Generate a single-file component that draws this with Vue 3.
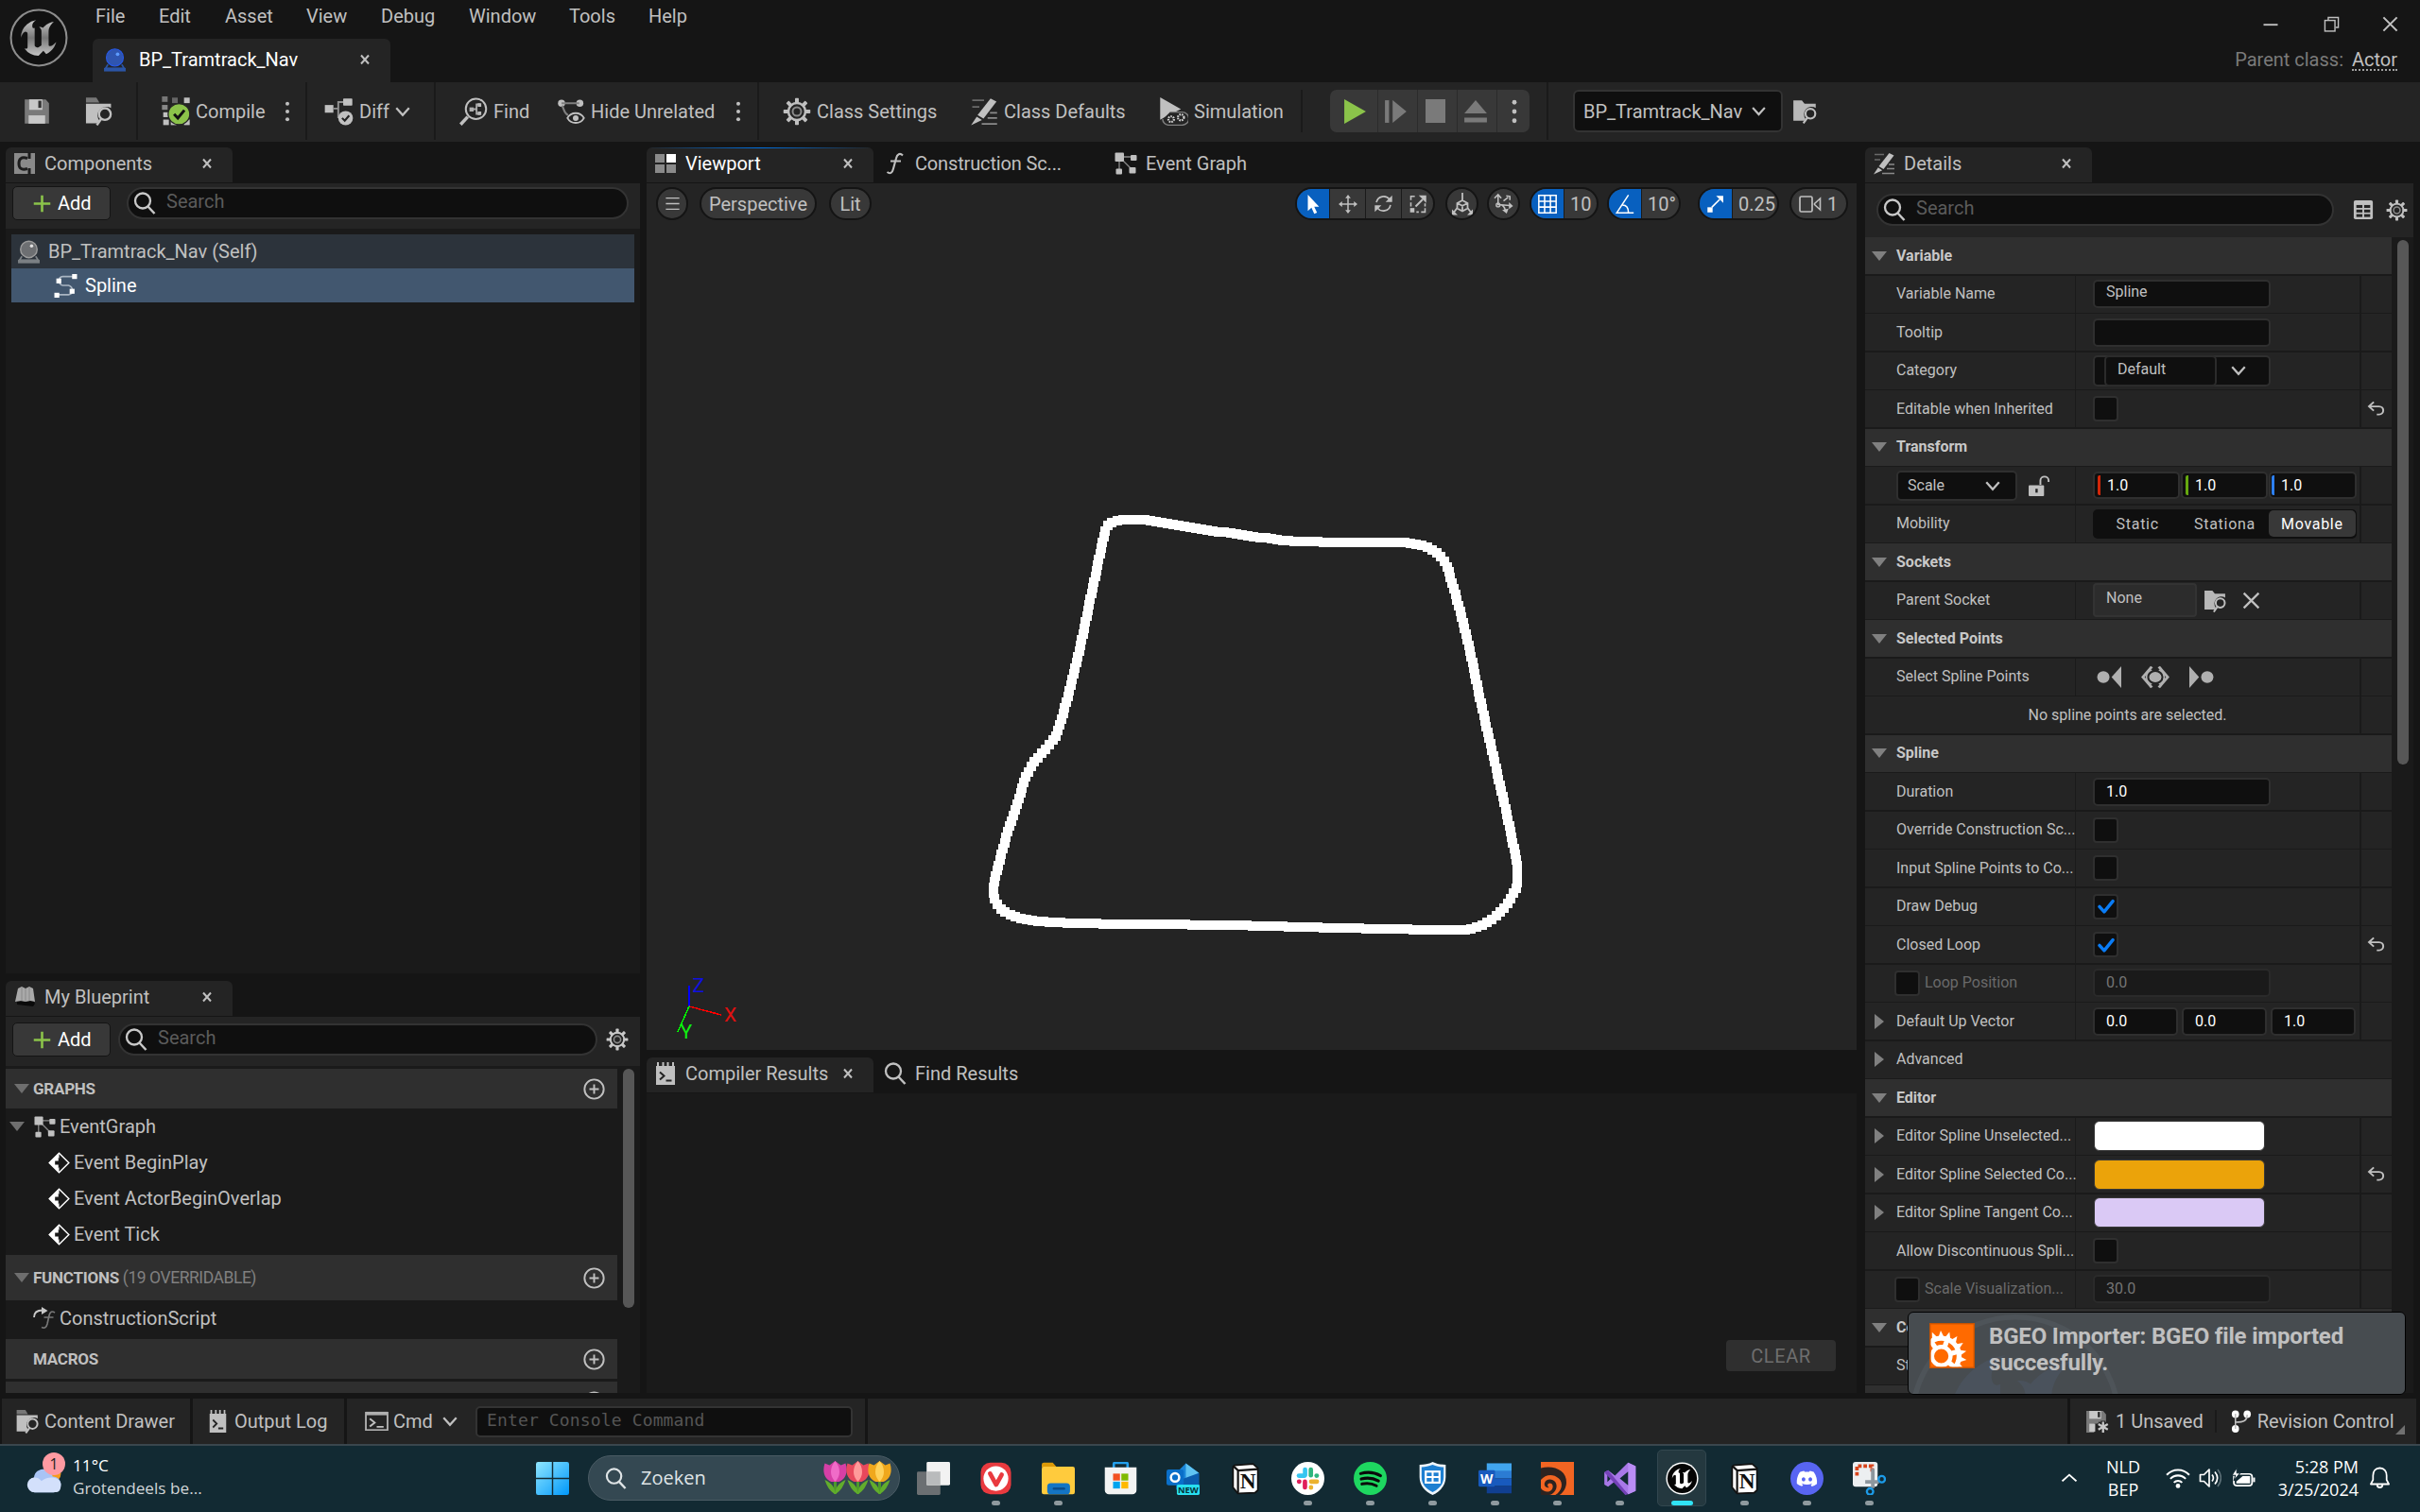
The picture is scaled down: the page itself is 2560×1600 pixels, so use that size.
<script setup>
import { h } from 'vue'

const gear = (() => {
  let teeth = ''
  for (let i = 0; i < 8; i++) teeth += `<rect x="10.4" y="0.6" width="3.2" height="5" rx=".6" transform="rotate(${i * 45} 12 12)" fill="currentColor"/>`
  return teeth + '<circle cx="12" cy="12" r="7.2" fill="none" stroke="currentColor" stroke-width="2"/><circle cx="12" cy="12" r="3.6" fill="none" stroke="#8a8a8a" stroke-width="1.6"/>'
})()

const unrealU = 'M19.13 13.729c-.206.997-1.126 3.557-4.06 4.942l-1.179-1.325-1.988 2a7.338 7.338 0 01-5.804-2.978 2.859 2.859 0 00.65.123c.326.006.678-.114.678-.66v-5.394a.89.89 0 00-1.116-.89c-.92.212-1.656 2.509-1.656 2.509a7.304 7.304 0 012.528-5.597 7.408 7.408 0 013.73-1.721c-1.006.573-1.57 1.507-1.57 2.29 0 1.262.76 1.109.984.923v7.28a1.157 1.157 0 00.148.256 1.075 1.075 0 00.88.445c.76 0 1.747-.868 1.747-.868V9.172c0-.6-.452-1.324-.905-1.572 0 0 .838-.149 1.484.346a5.537 5.537 0 01.387-.425c1.508-1.48 2.929-1.902 4.112-2.112 0 0-2.151 1.69-2.151 3.96 0 1.687.043 5.801.043 5.801.799.771 1.986-.342 3.059-1.441Z'

const tulip = (x, c1, c2) => `<path d="M${x} 18v17" stroke="#4c9a2a" stroke-width="3"/><path d="M${x} 35c-6-3-9-9-11-15 7 3 11 8 11 15zM${x} 35c6-3 9-9 11-15-7 3-11 8-11 15z" fill="#62ad2c"/><path d="M${x - 11} 2.500l5 2L${x} 0l6 4.500 5-2c3 9 0 17-7 19.500h-8c-7-2.500-10-10.500-7-19.500z" fill="${c1}"/><path d="M${x} 0c6 7 6 16 0 22-6-6-6-15 0-22z" fill="${c2}"/>`

const notion = '<path d="M4 2.5L17.5 1.5 21 4.5V20.5L19 22.3 6.5 22.8 3 18.5V3.5z" fill="#fff" stroke="#111" stroke-width="1.2"/><path d="M3.2 3L6.6 6.2V22.5M6.6 6.2L21 5.2" fill="none" stroke="#111" stroke-width="1.5"/><text x="13.8" y="19.2" text-anchor="middle" font-family="Liberation Serif, serif" font-weight="700" font-size="16" fill="#111">N</text>'

const icons = {
  logo: `<defs><linearGradient id="lg" x1="0" y1="0" x2="0" y2="1"><stop offset="0" stop-color="#c8c8c8"/><stop offset=".5" stop-color="#777"/><stop offset="1" stop-color="#c4c4c4"/></linearGradient></defs><circle cx="12" cy="12" r="11.4" fill="#111" stroke="#8d8d8d" stroke-width=".8"/><path d="${unrealU}" fill="url(#lg)"/>`,
  actorBlue: '<path d="M5 16.5L2.5 20.5h19L19 16.5" fill="none" stroke="#2b55a5" stroke-width="1.6"/><rect x="1" y="20" width="22" height="3.6" fill="#2b55a5"/><circle cx="12" cy="9.5" r="8.6" fill="#2f55b0" stroke="#2858e0" stroke-width="1.2"/><circle cx="14.8" cy="6" r="1.8" fill="#5d9bff"/>',
  actor: '<path d="M5 16.5L2.5 20.5h19L19 16.5" fill="none" stroke="#808589" stroke-width="1.6"/><rect x="1" y="20" width="22" height="3.6" fill="#7b8084"/><circle cx="12" cy="9.5" r="8.4" fill="#6d6f72" stroke="#9b9b9b" stroke-width="1.4"/><circle cx="14.8" cy="6" r="1.7" fill="#e0e0e0"/>',
  save: '<path d="M1 1h19l3 3.5V23H1z" fill="#7a7a7a"/><path d="M5 1h12v9.500H5z" fill="#c8c8c8"/><rect x="13.300" y="2.200" width="2.800" height="6.500" fill="#333"/><rect x="4.500" y="15.500" width="15" height="7.500" fill="#c8c8c8"/>',
  saveStar: '<path d="M1 1h17l3 3.500V14H1z M1 14h8v9H1z" fill="#7a7a7a"/><path d="M4 1h12v8H4z" fill="#c8c8c8"/><rect x="12.500" y="2" width="2.500" height="5.500" fill="#333"/><rect x="4" y="14" width="6" height="8" fill="#c8c8c8"/><path d="M18 11v12M12.700 14l10.600 6M23.300 14l-10.600 6" stroke="#242424" stroke-width="5"/><path d="M18 12v11M13.200 14.500l9.600 5.500M22.800 14.500l-9.600 5.500" stroke="#c8c8c8" stroke-width="2.200"/>',
  folderFind: '<path d="M1.500 1h8.500l2.500 4H1.500z" fill="#777"/><path d="M1.500 6H22v3.500a7.200 7.200 0 0 0-9.500 10.500l-2 2H1.500z" fill="#c0c0c0"/><circle cx="17" cy="14.500" r="4.800" fill="none" stroke="#c0c0c0" stroke-width="1.800"/><path d="M14 18.500l-3.600 5" stroke="#c0c0c0" stroke-width="1.900"/>',
  folderSmall: '<path d="M1 2h8l2.500 3H22v4a7.200 7.200 0 0 0-9.500 10.500l-1 1.500H1z" fill="#b8b8b8"/><circle cx="17" cy="14.500" r="4.600" fill="none" stroke="#c0c0c0" stroke-width="1.900"/><path d="M14 18.500l-3.600 5" stroke="#c0c0c0" stroke-width="1.900"/>',
  compile: '<g fill="#c0c0c0"><rect x="1" y="0" width="4.500" height="4.500" fill="#777"/><rect x="9" y="1" width="4.500" height="4.500" fill="#666"/><rect x="18.500" y="1" width="4.500" height="4.500"/><rect x="1" y="7" width="4.500" height="4" fill="#888"/><rect x="2" y="13" width="4" height="4"/><rect x="2" y="19" width="4.500" height="4.500"/><rect x="8" y="19" width="4.500" height="4.500"/><rect x="18.500" y="19" width="4.500" height="4.500"/></g><circle cx="14.500" cy="14.500" r="8.600" fill="#8bc34a" stroke="#242424" stroke-width="1"/><path d="M10.600 14.500l3 3.300 5.200-6.500" fill="none" stroke="#111" stroke-width="2.200"/>',
  diff: '<rect x="0.500" y="6.500" width="7" height="6.500" fill="#c0c0c0"/><rect x="15.500" y="1" width="7.500" height="6" rx=".6" fill="#c0c0c0"/><path d="M7 9.500h4.500V4h4M11.500 9.500v8" fill="none" stroke="#909090" stroke-width="1.500"/><circle cx="17.500" cy="17.500" r="6" fill="#c0c0c0"/><path d="M14.600 17.500l2.200 2.300 3.600-4.400" fill="none" stroke="#222" stroke-width="1.600"/>',
  find: '<circle cx="14" cy="9.800" r="8.600" fill="none" stroke="#c0c0c0" stroke-width="1.600"/><path d="M7 16.500l-6 6.500" stroke="#c0c0c0" stroke-width="2.800"/><rect x="8.500" y="8.500" width="3.500" height="3.500" fill="#b0b0b0"/><path d="M17.500 6h-3v8h3M12 10h2.500" fill="none" stroke="#aaa" stroke-width="1.500"/><rect x="15.500" y="5" width="3" height="3" fill="#bbb"/><rect x="15.500" y="12" width="3" height="3" fill="#bbb"/>',
  hide: '<circle cx="4" cy="5" r="3" fill="#c0c0c0"/><circle cx="19.500" cy="5" r="3" fill="#c0c0c0"/><path d="M4 5h15M4.500 7c2 4 2 7 5 8" fill="none" stroke="#808080" stroke-width="1.700"/><path d="M9 17.500c3-5.500 11-5.500 14 0-3 5.500-11 5.500-14 0z" fill="#242424" stroke="#c0c0c0" stroke-width="1.500"/><circle cx="16" cy="17.500" r="2.400" fill="#c0c0c0"/>',
  gear,
  pen: '<g stroke="#8a8a8a" stroke-width="1.400"><path d="M2 2.500h10M2 8h6" stroke="#6a6a6a"/><path d="M17 13h6M15 17.500h8M10 22.500h13"/></g><path d="M17.500 1l5 2.500-11 14.500-5-3z" fill="#c0c0c0"/><path d="M5.800 16.300l4.400 2.900L1 23.500z" fill="#c0c0c0"/>',
  sim: '<path d="M1 0L18 10 8 15v0L1 19z" fill="#c0c0c0"/><path d="M9 12.500h10a5.200 5.200 0 0 1 0 11H8a5.200 5.200 0 0 1-5-5" fill="#242424" stroke="#808080" stroke-width="1.100"/><circle cx="10" cy="18.500" r="2.300" fill="none" stroke="#d0d0d0" stroke-width="1.700" stroke-dasharray="1.300 .7"/><circle cx="18" cy="17" r="2.500" fill="none" stroke="#d0d0d0" stroke-width="1.700" stroke-dasharray="1.300 .7"/>',
  play: '<path d="M1 0L23 12 1 24z" fill="#8bc34a"/>',
  step: '<rect x="1" y="1" width="4" height="22" fill="#7a7a7a"/><path d="M8.500 1L22 12 8.500 23z" fill="#7a7a7a"/>',
  stop: '<rect x="1" y="0" width="21" height="24" fill="#7a7a7a"/>',
  eject: '<path d="M12 0l11 14H1z" fill="#7a7a7a"/><rect x="1" y="18.500" width="22" height="5" fill="#7a7a7a"/>',
  dots: '<circle cx="12" cy="3" r="2.200" fill="currentColor"/><circle cx="12" cy="12" r="2.200" fill="currentColor"/><circle cx="12" cy="21" r="2.200" fill="currentColor"/>',
  chev: '<path d="M3 7l9 10 9-10" fill="none" stroke="currentColor" stroke-width="3"/>',
  chevUp: '<path d="M2 17l10-10 10 10" fill="none" stroke="currentColor" stroke-width="2.600"/>',
  close: '<path d="M4 3l16 18M20 3L4 21" fill="none" stroke="currentColor" stroke-width="4"/>',
  closeThin: '<path d="M3 3l18 18M21 3L3 21" fill="none" stroke="currentColor" stroke-width="2.600"/>',
  min: '<rect x="2" y="11" width="20" height="2.500" fill="currentColor"/>',
  restore: '<path d="M7 6V2h15v15h-4" fill="none" stroke="currentColor" stroke-width="2"/><rect x="2" y="6.500" width="15" height="16" fill="none" stroke="currentColor" stroke-width="2"/>',
  comp: '<path d="M1 1h22v22H1z" fill="#8a8a8a"/><path d="M15 6.500c-7-2-9 1-9 5.500s2 7.500 9 5.500" fill="none" stroke="#1d1d1d" stroke-width="3"/><path d="M17 0v7M17 17v7" stroke="#1d1d1d" stroke-width="3"/>',
  book: '<path d="M4 20l17 2 2-3-2-3-17 1z" fill="#0a0a0a"/><path d="M5 3l4-2 4 2 4-2 4 2 2 14-5-1-5 1-5-1-6 1z" fill="#a9a9a9"/><path d="M9 1v15M13 3v14M17 2v14" stroke="#8a8a8a" stroke-width="1"/>',
  vp: '<rect x="1" y="2" width="10" height="9" fill="#8a8a8a"/><rect x="13" y="2" width="10" height="9" fill="#fff"/><rect x="1" y="13" width="10" height="9" fill="#8a8a8a"/><rect x="13" y="13" width="10" height="9" fill="#8a8a8a"/>',
  fn: '<path d="M20 3.500c-3-3-6-1.500-7 3l-3 11c-1 4.500-3.500 6-6.500 3.500M7 9.500h11" fill="none" stroke="currentColor" stroke-width="2.100"/>',
  fnArrow: '<path d="M1 11c0-5 3-7.500 9-7.500" fill="none" stroke="#c8c8c8" stroke-width="1.800"/><path d="M9 0l6.500 4L9 8z" fill="#c8c8c8"/><path d="M23 6c-3-2-5-1-6 3l-2 9c-1 4-3 5-6 3.500M11.500 11h10" fill="none" stroke="#777" stroke-width="1.700"/>',
  graph: '<path d="M5 5h15M5 5v16M6 6l13 13" fill="none" stroke="#8a8a8a" stroke-width="1.300"/><rect x="0.500" y="0.500" width="9.500" height="9.500" rx="1" fill="#c0c0c0"/><rect x="17" y="3" width="6.500" height="6" rx="1" fill="#c0c0c0"/><rect x="1.500" y="17.500" width="6.500" height="6" rx="1" fill="#c0c0c0"/><rect x="15.500" y="16" width="7" height="6.500" rx="1" fill="#c0c0c0"/>',
  event: '<path d="M12 1.200L22.800 12 12 22.800 1.200 12z" fill="none" stroke="#fff" stroke-width="1.500"/><path d="M12 1L1 12l11 11z" fill="#fff"/><path d="M7.500 9.800h3.700V6L17 12l-5.800 6v-3.800H7.500z" fill="#1a1a1a"/>',
  plusC: '<circle cx="12" cy="12" r="10.600" fill="none" stroke="currentColor" stroke-width="2"/><path d="M12 6.800v10.400M6.800 12h10.400" stroke="currentColor" stroke-width="2"/>',
  plus: '<path d="M12 2v20M2 12h20" stroke="#8bc34a" stroke-width="3"/>',
  search: '<circle cx="10" cy="9.500" r="8" fill="none" stroke="currentColor" stroke-width="2.300"/><path d="M15.500 15.500L22.500 23" stroke="currentColor" stroke-width="2.500"/>',
  spline: '<path d="M21 2.500H9C4 3 4 10 9 11.500h6c5 1.500 5 9 0 9.500H3" fill="none" stroke="#a9b5c2" stroke-width="1.500"/><g fill="#fff"><rect x="18.500" y="0" width="5" height="5"/><rect x="2.500" y="4.500" width="5" height="5"/><rect x="16" y="15" width="5" height="5"/><rect x="0.500" y="19" width="5" height="5"/></g>',
  burger: '<path d="M3 4.500h18M3 12h18M3 19.500h18" stroke="currentColor" stroke-width="1.700"/>',
  cursor: '<path d="M6 1v19l4.200-3.800 3.200 7 3.200-1.500-3.200-6.700H19z" fill="#fff"/>',
  move: '<path d="M12 3v18M3 12h18" stroke="currentColor" stroke-width="1.800"/><path d="M12 0l3.500 4.500h-7zM12 24l3.500-4.500h-7zM0 12l4.500-3.500v7zM24 12l-4.500-3.500v7z" fill="currentColor"/>',
  rotate: '<path d="M3.500 10.500C5 2.500 15 1 19.500 7M20.500 13.500C19 21.500 9 23 4.500 17" fill="none" stroke="currentColor" stroke-width="1.900"/><path d="M22.500 2v8h-8zM1.500 22v-8h8z" fill="currentColor"/>',
  scale: '<path d="M8 2H3v5M3 10v5M21 11v4M16 22h5v-5M10 22h3" fill="none" stroke="currentColor" stroke-width="1.900"/><path d="M9 15l9-9" stroke="currentColor" stroke-width="2.400"/><path d="M22.500 1v9.500L13 1z" fill="currentColor"/><rect x="2" y="17" width="5.500" height="5.500" fill="currentColor"/>',
  local: '<path d="M12 0v9M12 8l5.500 3v5.500L12 19.500 6.500 16.500V11zM6.500 11l5.500 2.700 5.500-2.700M12 13.500v6M6.500 16L2 22M17.500 16l4.500 6" fill="none" stroke="currentColor" stroke-width="1.800"/><path d="M1 17.500v6h6zM23 17.500v6h-6z" fill="currentColor"/>',
  snap: '<path d="M6 2v11c3 0 6 0 8 6M6 13l13 1M12 9l5-4M2 6l4-4 3.500 4M15 3.500l4 .5v4" fill="none" stroke="currentColor" stroke-width="1.600"/><path d="M18 10.500l4.500 4-4.500 3.500zM10.500 19l5 4 2-5.500z" fill="currentColor"/><circle cx="6" cy="13.500" r="2" fill="none" stroke="currentColor" stroke-width="1.500"/>',
  grid: '<path d="M2 2h20v20H2zM8.700 2v20M15.400 2v20M2 8.700h20M2 15.400h20" fill="none" stroke="#fff" stroke-width="1.700"/>',
  angle: '<path d="M16 1.500L2.500 22H22M9 13c5 0 7 4 7 9" fill="none" stroke="#fff" stroke-width="1.700"/>',
  scaleSnap: '<path d="M7 16l10-10" stroke="#fff" stroke-width="2"/><path d="M21.500 1.500v9l-9-9z" fill="#fff"/><rect x="1.500" y="16" width="6.500" height="6.500" fill="#fff"/>',
  cam: '<rect x="1" y="4" width="13" height="16" rx="1.500" fill="none" stroke="currentColor" stroke-width="1.700"/><path d="M16.500 11.500l6-5.500v12l-6-5.500z" fill="none" stroke="currentColor" stroke-width="1.600"/>',
  log: '<path d="M2 4h20v20H2z" fill="#c0c0c0"/><path d="M4 0v5M9.500 0v5M14.500 0v5M20 0v5" stroke="#c0c0c0" stroke-width="2"/><path d="M6 10.500l4.500 4L6 18.500M12.500 19.500h6" fill="none" stroke="#222" stroke-width="2"/>',
  cmd: '<rect x="1" y="2" width="22" height="20" fill="none" stroke="#b0b0b0" stroke-width="1.800"/><rect x="1" y="1" width="22" height="4" fill="#b0b0b0"/><path d="M5 9l5 4.500L5 18M12 18.500h7" fill="none" stroke="currentColor" stroke-width="1.900"/>',
  branch: '<circle cx="6" cy="4.500" r="4" fill="#fff"/><circle cx="19" cy="4.500" r="4" fill="#fff"/><circle cx="6" cy="20" r="4" fill="#fff"/><path d="M6 4v16M19 5c0 6-3 8-13 8" fill="none" stroke="#c0c0c0" stroke-width="1.600"/>',
  tableIc: '<rect x="1" y="1" width="22" height="22" rx="2" fill="#c0c0c0"/><g fill="#242424"><rect x="4" y="6.500" width="7" height="3.300"/><rect x="13" y="6.500" width="7" height="3.300"/><rect x="4" y="11.800" width="7" height="3.300"/><rect x="13" y="11.800" width="7" height="3.300"/><rect x="4" y="17" width="7" height="3.300"/><rect x="13" y="17" width="7" height="3.300"/></g>',
  reset: '<path d="M9 2L2.500 8.500 9 15M3 8.500h13c7.500 0 7.500 12 0 12h-3" fill="none" stroke="currentColor" stroke-width="2.500"/>',
  lock: '<rect x="0" y="11.500" width="17" height="12.500" rx="1" fill="#c0c0c0"/><rect x="7.500" y="15.500" width="2.500" height="4.500" fill="#222"/><path d="M13 11V6c0-6 9-6 9 0v1.500" fill="none" stroke="#c0c0c0" stroke-width="2"/>',
  prevPt: '<ellipse cx="6.500" cy="12" rx="6" ry="6.500" fill="#b0b0b0"/><path d="M24 0v24L14.500 12z" fill="#b0b0b0"/>',
  nextPt: '<ellipse cx="17.500" cy="12" rx="6" ry="6.500" fill="#b0b0b0"/><path d="M0 0v24L9.500 12z" fill="#b0b0b0"/>',
  allPt: '<circle cx="12" cy="12" r="5.200" fill="#b0b0b0"/><path d="M9 1.500L1.500 12 9 22.500M15 1.500L22.500 12 15 22.500" fill="none" stroke="#b0b0b0" stroke-width="2.400"/><path d="M9 4.800a8 8 0 0 0 0 14.400M15 4.800a8 8 0 0 1 0 14.400" fill="none" stroke="#b0b0b0" stroke-width="1.300"/>',
  check: '<path d="M3.500 12.500l6 6.500L20.500 5.500" fill="none" stroke="#0a7cf5" stroke-width="4.200" stroke-linecap="round" stroke-linejoin="round"/>',
  houdiniToast: (() => {
    let t = ''
    for (let i = 0; i < 18; i++) t += `<path d="M4.600 8L6 4l2 4z" transform="rotate(${i * 20} 6.300 17.500)" fill="#fff"/>`
    let sp = ''
    for (const a of [-35, 20, 75, 130]) sp += `<path d="M5 13V8h2.600v5z" transform="rotate(${a} 6.300 17.500)" fill="#fff"/>`
    return '<defs><clipPath id="ht"><rect x=".7" y=".7" width="22.600" height="22.600"/></clipPath></defs><rect width="24" height="24" fill="#ff6a00"/><g clip-path="url(#ht)">' + t + '<circle cx="6.300" cy="17.500" r="9.400" fill="none" stroke="#fff" stroke-width="2.600"/>' + sp + '<circle cx="6.300" cy="17.500" r="4.900" fill="#ff6a00" stroke="#fff" stroke-width="2.200"/></g><rect x=".35" y=".35" width="23.300" height="23.300" fill="none" stroke="#c85300" stroke-width=".7"/>'
  })(),
  start: '<defs><linearGradient id="wg" x1="0" y1="0" x2="1" y2="1"><stop offset="0" stop-color="#8fe6ff"/><stop offset="1" stop-color="#0098fb"/></linearGradient></defs><path d="M1.500 0h10v11.500H0V1.500A1.500 1.500 0 0 1 1.500 0zM12.500 0h10A1.500 1.500 0 0 1 24 1.500v10H12.500zM0 12.500h11.500V24h-10A1.500 1.500 0 0 1 0 22.500zM12.500 12.500H24v10a1.500 1.500 0 0 1-1.500 1.500h-10z" fill="url(#wg)"/>',
  taskview: '<rect x="0" y="7" width="17" height="17" rx="1" fill="#6b6f72"/><rect x="7" y="0" width="17" height="17" rx="1" fill="#f2f2f2"/><rect x="7" y="7" width="10" height="10" fill="#b9bbbc"/>',
  vivaldi: '<rect x="1" y="0.500" width="22" height="23" rx="7" fill="#e93a3f"/><circle cx="12" cy="12" r="9" fill="#fff"/><path d="M7.800 8.500l4.400 8 4-7.200" fill="none" stroke="#e93a3f" stroke-width="3.200" stroke-linecap="round" stroke-linejoin="round"/>',
  explorer: '<path d="M0 2a1.500 1.500 0 0 1 1.500-1.500H8L11 4H0z" fill="#dc9a08"/><rect y="3.500" width="24" height="20" rx="1.500" fill="#ffcb3d"/><rect x="4" y="15.500" width="16.500" height="8" rx="2.500" fill="#1475c4"/><rect x="8" y="18.500" width="9" height="1.700" rx=".8" fill="#0b4d8c"/>',
  store: '<path d="M7 5V1.500A1 1 0 0 1 8 .6h8a1 1 0 0 1 1 .9V5" fill="none" stroke="#24a0ed" stroke-width="1.800"/><path d="M.5 4h23v16.500a3 3 0 0 1-3 3h-17a3 3 0 0 1-3-3z" fill="#f3f3f3"/><rect x="6.500" y="8.500" width="5" height="5" fill="#f25022"/><rect x="12.500" y="8.500" width="5" height="5" fill="#7fba00"/><rect x="6.500" y="14.300" width="5" height="5" fill="#00a4ef"/><rect x="12.500" y="14.300" width="5" height="5" fill="#ffb900"/>',
  outlook: '<path d="M7 8l7-7 9.500 7v12H7z" fill="#1a86d9"/><path d="M14 1l9.500 7L14 14z" fill="#5fc3f2"/><path d="M7 14l16.500-6v12H7z" fill="#0b5cad"/><rect x="0" y="5.500" width="12.500" height="11.500" rx="1.500" fill="#0a6fc9"/><circle cx="6.200" cy="11.300" r="3" fill="none" stroke="#fff" stroke-width="1.700"/><rect x="7.500" y="16.500" width="16.500" height="7.500" rx="1" fill="#28dff0"/><text x="15.700" y="22.600" text-anchor="middle" font-family="Open Sans, sans-serif" font-weight="700" font-size="6.400" fill="#04323a">NEW</text>',
  notion,
  slack: '<circle cx="12" cy="12" r="12" fill="#fff"/><g stroke-width="3.200" stroke-linecap="round"><path d="M10 5.500v4" stroke="#36c5f0"/><path d="M5.500 10h4.200" stroke="#36c5f0"/><path d="M14.200 5.500v4.200" stroke="#2eb67d"/><path d="M18.300 10h.2" stroke="#2eb67d"/><path d="M14.400 14.300h4.200M14.300 18.400v.2" stroke="#ecb22e"/><path d="M9.900 14.300v4.200M5.600 14.300h.2" stroke="#e01e5a"/></g>',
  spotify: '<circle cx="12" cy="12" r="12" fill="#1ed760"/><path d="M5 8.500c5-1.500 10-1 14.500 1.500M5.500 12.400c4.500-1.200 8.500-.8 12.500 1.400M6 16c4-.9 7-.6 10.500 1.300" fill="none" stroke="#0a0a0a" stroke-width="2.100" stroke-linecap="round"/>',
  shield: '<path d="M12 0c3 1.500 6 2 9.500 2v9c0 6-4 10.500-9.500 13C6.500 21.500 2.500 17 2.500 11V2C6 2 9 1.500 12 0z" fill="#eef5fb"/><path d="M12 2c3 1 5 1.700 8 1.800V11c0 5-3 8.500-8 11-5-2.500-8-6-8-11V3.800C7 3.700 9 3 12 2z" fill="#1d7fd1"/><rect x="7" y="7" width="10" height="8" fill="none" stroke="#fff" stroke-width="1.500"/><path d="M7 11h10M12 7v8" stroke="#fff" stroke-width="1.400"/>',
  word: '<rect x="6" y="1" width="18" height="5.800" fill="#41a5ee"/><rect x="6" y="6.500" width="18" height="5.500" fill="#2b7cd3"/><rect x="6" y="12" width="18" height="5.500" fill="#185abd"/><rect x="6" y="17.500" width="18" height="5.300" fill="#103f91"/><rect x="0" y="6" width="12" height="12" rx="1" fill="#185abd"/><text x="6" y="15.500" text-anchor="middle" font-family="Open Sans, sans-serif" font-weight="700" font-size="9.500" fill="#fff">W</text>',
  houdini: '<rect width="24" height="24" fill="#f26522"/><path d="M0 4.500C9 2 19 6 18.500 15c-.1 3.500-2 7-5 9h-3c5-3 6-9 2.500-12C8.500 8 3 9.500 0 13z" fill="#2d2320"/><path d="M0 24v-5c2 3 6 3.500 8 1 1.500-2 .5-4.500-1.500-4.500S4.500 18 6 18.500c-2 .8-3.800-1-3.300-3 .6-2.500 3.500-3.500 6-2.300 3.300 1.500 3.500 6 1 8.500-1 1.200-2.300 2-3.700 2.300z" fill="#2d2320"/>',
  vs: '<path d="M18 .5l5.500 2.500v18L18 23.500 8.500 14 3.500 18 .8 16.500v-9L3.500 6l5 4z" fill="#a878e8"/><path d="M18 .5l5.500 2.500v18L18 23.500z" fill="#b98cf5"/><path d="M18 7v10l-6-5zM3 9.500v5L5.600 12z" fill="#122a33"/><path d="M.8 7.500L3.500 6 18 23.500l-2 .5z" fill="#7442b8"/>',
  ue: `<circle cx="12" cy="12" r="11.700" fill="#fff"/><circle cx="12" cy="12" r="10.700" fill="#050505"/><path d="${unrealU}" fill="#fff"/>`,
  discord: '<circle cx="12" cy="12" r="12" fill="#5865f2"/><g transform="translate(4.600 4.700) scale(.615)"><path fill="#fff" d="M20.317 4.370a19.791 19.791 0 00-4.885-1.515.074.074 0 00-.079.037c-.211.375-.445.865-.608 1.250-1.845-.276-3.680-.276-5.487 0-.164-.393-.406-.874-.618-1.250a.077.077 0 00-.079-.037 19.736 19.736 0 00-4.885 1.515C.533 9.046-.319 13.580.099 18.058c2.084 1.564 4.072 2.479 6.024 3.085.5-.658.957-1.323 1.310-2.022-.694-.353-1.315-.655-1.913-.998l.372-.419c4.006 1.783 8.258 1.783 12.139 0l.373.302-1.880 1.147c.32.805.731 1.470 1.185 2.100 2.045-.578 4.034-1.494 6.086-3.001.532-5.232-.806-9.729-3.517-13.716zM8.020 15.331c-1.183 0-2.157-1.086-2.157-2.419s.956-2.419 2.157-2.419 2.176 1.095 2.157 2.419c0 1.333-.956 2.419-2.157 2.419zm7.975 0c-1.183 0-2.157-1.086-2.157-2.419s.955-2.419 2.157-2.419 2.176 1.095 2.157 2.419c0 1.333-.946 2.419-2.157 2.419z"/></g>',
  snip: '<rect x="0" y="0" width="18" height="18" rx="2" fill="#eceff1"/><path d="M3 10V3h11v4" fill="none" stroke="#d8441b" stroke-width="2.600" stroke-dasharray="2.600 1.300"/><path d="M14.500 5v14M9 14.500h10" stroke="#8d979e" stroke-width="2.600"/><circle cx="21" cy="12.500" r="2.300" fill="none" stroke="#1c9be8" stroke-width="1.600"/><circle cx="12.500" cy="21.500" r="2.300" fill="none" stroke="#1c9be8" stroke-width="1.600"/>',
  wifi: '<path d="M1 9C7 2.500 17 2.500 23 9M4.500 12.800c4.200-4.300 10.800-4.300 15 0M8 16.500c2.200-2.300 5.800-2.300 8 0" fill="none" stroke="#fff" stroke-width="1.900"/><circle cx="12" cy="19.800" r="2.200" fill="#fff"/>',
  vol: '<path d="M1.500 8.500h4L11 3v18l-5.500-5.500h-4z" fill="none" stroke="#fff" stroke-width="1.700" stroke-linejoin="round"/><path d="M14 8.500c1.600 2 1.600 5 0 7M17 5.500c3.300 4 3.300 9 0 13" fill="none" stroke="#fff" stroke-width="1.700"/><path d="M20 3c4.500 5.500 4.500 12.500 0 18" fill="none" stroke="#5c6f77" stroke-width="1.600"/>',
  batt: '<rect x="2" y="7" width="18.500" height="13" rx="3" fill="none" stroke="#fff" stroke-width="1.700"/><path d="M11 9.500h7.500v8H4.500v-2z" fill="#fff"/><rect x="21.500" y="11" width="2" height="5" fill="#fff"/><path d="M5 0L0 8.500h3.500L2 14.500 8.500 6H5z" fill="#fff" stroke="#122a33" stroke-width="1"/>',
  bell: '<path d="M12 1.500c-5 0-7.500 3.500-7.500 8V14L2 18.500h20L19.500 14V9.500c0-4.500-2.500-8-7.500-8zM9 19c0 4 6 4 6 0" fill="none" stroke="#fff" stroke-width="1.800" stroke-linejoin="round"/>',
  weather: '<circle cx="17" cy="11" r="6" fill="#f59a1b"/><path d="M5.500 23.500a5 5 0 0 1-.5-9.900c.4-4 3.500-5.600 6.500-5.600s5.500 2 6 5c3.500 0 5.500 2.500 5.500 5.200s-2 5.300-5 5.300z" fill="#a9c4f5"/><path d="M5.500 23.500a5 5 0 0 1 0-10c2 0 3.500 1 4.500 2.500 4-4 13-3 13 2.200s-2 5.300-5 5.300z" fill="#d3e0fb"/>',
}

const Icon = (p) => h('svg', {
  viewBox: p.box || '0 0 24 24',
  width: p.w || p.s || 24,
  height: p.h || p.s || 24,
  preserveAspectRatio: 'none',
  innerHTML: icons[p.n],
})
Icon.props = ['n', 's', 'w', 'h', 'box']

const menu = [['File', 67], ['Edit', 70], ['Asset', 86], ['View', 79], ['Debug', 93], ['Window', 106], ['Tools', 84], ['Help', 60]]

const loop = [
  [1194, 550], [1178, 552], [1169, 563], [1156, 622], [1139, 700], [1121, 768], [1114, 783], [1103, 796], [1093, 808], [1085, 822], [1079, 841],
  [1064, 887], [1053, 930], [1052, 951], [1063, 965], [1087, 973], [1139, 977], [1297, 979], [1415, 982], [1534, 984],
  [1560, 982], [1582, 970], [1597, 953], [1604, 938], [1605, 920], [1601, 895], [1595, 866], [1571, 763], [1551, 672], [1534, 610],
  [1527, 593], [1514, 581], [1493, 575], [1455, 574], [1376, 573], [1336, 569], [1265, 559], [1218, 551],
]
// The debug line is drawn as square samples placed along a Catmull-Rom curve.
const splinePath = (() => {
  const n = loop.length
  const at = (i) => loop[(i + n) % n]
  const spacing = 6
  let last = [0, 0]
  let d = ''
  for (let i = 0; i < n; i++) {
    const [a, b, c, e] = [at(i - 1), at(i), at(i + 1), at(i + 2)]
    for (let t = 0; t < 1; t += 0.005) {
      const p = [0, 1].map((k) => 0.5 * (2 * b[k] + (c[k] - a[k]) * t + (2 * a[k] - 5 * b[k] + 4 * c[k] - e[k]) * t * t + (3 * b[k] - a[k] - 3 * c[k] + e[k]) * t * t * t))
      if (Math.hypot(p[0] - last[0], p[1] - last[1]) >= spacing) {
        last = p
        d += `M${Math.round(p[0] - 5)} ${Math.round(p[1] - 5)}h10v10h-10z`
      }
    }
  }
  return d
})()

const rows = [
  { k: 'head', l: 'Variable' },
  { k: 'text', l: 'Variable Name', v: 'Spline' },
  { k: 'text', l: 'Tooltip', v: '' },
  { k: 'combo', l: 'Category' },
  { k: 'check', l: 'Editable when Inherited', reset: true },
  { k: 'head', l: 'Transform' },
  { k: 'scale' },
  { k: 'mobility', l: 'Mobility' },
  { k: 'head', l: 'Sockets' },
  { k: 'socket', l: 'Parent Socket' },
  { k: 'head', l: 'Selected Points' },
  { k: 'points', l: 'Select Spline Points' },
  { k: 'note', l: 'No spline points are selected.' },
  { k: 'head', l: 'Spline' },
  { k: 'num', l: 'Duration', v: '1.0' },
  { k: 'check', l: 'Override Construction Sc...' },
  { k: 'check', l: 'Input Spline Points to Co...' },
  { k: 'check', l: 'Draw Debug', on: true },
  { k: 'check', l: 'Closed Loop', on: true, reset: true },
  { k: 'num', l: 'Loop Position', v: '0.0', off: true },
  { k: 'vec', l: 'Default Up Vector', exp: true },
  { k: 'adv', l: 'Advanced', exp: true },
  { k: 'head', l: 'Editor' },
  { k: 'color', l: 'Editor Spline Unselected...', c: 'white', exp: true },
  { k: 'color', l: 'Editor Spline Selected Co...', c: 'orange', exp: true, reset: true },
  { k: 'color', l: 'Editor Spline Tangent Co...', c: 'lilac', exp: true },
  { k: 'check', l: 'Allow Discontinuous Spli...' },
  { k: 'num', l: 'Scale Visualization...', v: '30.0', off: true },
  { k: 'head', l: 'Cooking' },
  { k: 'text', l: 'Start', v: '' },
  { k: 'head', l: '' },
]

const apps = [
  ['taskview', 0], ['vivaldi', 1], ['explorer', 1], ['store', 0], ['outlook', 0], ['notion', 0], ['slack', 1], ['spotify', 1],
  ['shield', 1], ['word', 1], ['houdini', 1], ['vs', 1], ['ue', 2], ['notion', 1], ['discord', 1], ['snip', 1],
]
const events = ['Event BeginPlay', 'Event ActorBeginOverlap', 'Event Tick']
const tulips = tulip(12, '#d63fa6', '#f06cc8') + tulip(36, '#e8485c', '#ff9a9a') + tulip(59, '#f0a81c', '#ffd25a')
</script>

<template>
  <div class="screen">
    <header class="title">
      <Icon n="logo" s="62" class="logo" />
      <div class="title-main">
        <nav class="menu"><span v-for="m in menu" :key="m[0]" :style="{ width: m[1] + 'px' }">{{ m[0] }}</span></nav>
        <div class="doc-tab"><Icon n="actorBlue" s="25" /><span class="doc-name">BP_Tramtrack_Nav</span><Icon n="close" s="12" class="doc-x" /></div>
      </div>
      <div class="title-right">
        <div class="win"><Icon n="min" s="18" class="wmin" /><Icon n="restore" s="17" /><Icon n="closeThin" s="19" /></div>
        <div class="parent">Parent class: <b>Actor</b></div>
      </div>
    </header>

    <div class="toolbar">
      <div class="tg g1"><Icon n="save" w="28" h="28" /><Icon n="folderFind" s="31" /></div>
      <div class="tg g2"><Icon n="compile" w="32" h="31" /><span>Compile</span><Icon n="dots" s="22" class="end" /></div>
      <div class="tg g3"><Icon n="diff" w="31" h="30" /><span>Diff</span><Icon n="chev" s="18" class="chv" /></div>
      <div class="tg g4"><Icon n="find" s="30" /><span class="t-find">Find</span><Icon n="hide" s="30" /><span>Hide Unrelated</span><Icon n="dots" s="22" class="end" /></div>
      <div class="tg g5">
        <Icon n="gear" s="30" /><span class="t-set">Class Settings</span>
        <Icon n="pen" s="30" /><span class="t-def">Class Defaults</span>
        <Icon n="sim" w="31" h="30" /><span class="t-sim">Simulation</span>
      </div>
      <div class="tg g6">
        <div class="play">
          <i class="p1"><Icon n="play" w="25" h="26" /></i><i><Icon n="step" w="26" h="26" /></i><i><Icon n="stop" w="24" h="25" /></i><i><Icon n="eject" w="26" h="24" /></i><i class="p5"><Icon n="dots" s="26" /></i>
        </div>
      </div>
      <div class="tg g7"><div class="objsel"><span>BP_Tramtrack_Nav</span><Icon n="chev" s="17" /></div><Icon n="folderSmall" s="27" class="objfind" /></div>
    </div>

    <main class="work">
      <aside class="left">
        <div class="tabs"><div class="tab"><Icon n="comp" s="23" class="tic" /><span class="tt">Components</span><Icon n="close" s="12" class="x" /></div></div>
        <div class="ptool comp-tool">
          <div class="add"><Icon n="plus" s="21" />Add</div>
          <div class="search"><Icon n="search" s="24" /><span>Search</span></div>
        </div>
        <div class="tree">
          <div class="trow self"><Icon n="actor" s="25" /><span>BP_Tramtrack_Nav (Self)</span></div>
          <div class="trow sel"><Icon n="spline" s="25" /><span>Spline</span></div>
        </div>
        <div class="tabs bp-tabs"><div class="tab"><Icon n="book" s="25" class="tic" /><span class="tt">My Blueprint</span><Icon n="close" s="12" class="x" /></div></div>
        <div class="ptool bp-tool">
          <div class="add"><Icon n="plus" s="21" />Add</div>
          <div class="search"><Icon n="search" s="24" /><span>Search</span></div>
          <Icon n="gear" s="24" class="gear" />
        </div>
        <div class="bp">
          <div class="bp-list">
            <div class="bh"><u class="tri" /><b>GRAPHS</b><Icon n="plusC" s="23" /></div>
            <div class="bi eg"><u class="tri" /><Icon n="graph" s="23" /><span>EventGraph</span></div>
            <div v-for="e in events" :key="e" class="bi ev"><Icon n="event" s="23" /><span>{{ e }}</span></div>
            <div class="bh fn"><u class="tri" /><b>FUNCTIONS</b><em>(19 OVERRIDABLE)</em><Icon n="plusC" s="23" /></div>
            <div class="bi cs"><Icon n="fnArrow" s="24" /><span>ConstructionScript</span></div>
            <div class="bh mac"><b>MACROS</b><Icon n="plusC" s="23" /></div>
            <div class="bh last"><b></b><Icon n="plusC" s="23" /></div>
          </div>
          <div class="bar" />
        </div>
      </aside>

      <section class="mid">
        <div class="tabs">
          <div class="tab active"><Icon n="vp" s="25" class="tic" /><span class="tt">Viewport</span><Icon n="close" s="12" class="x" /></div>
          <div class="tab ghost"><Icon n="fn" w="20" h="22" class="tic" /><span class="tt tight">Construction Sc...</span></div>
          <div class="tab ghost third"><Icon n="graph" s="23" class="tic" /><span class="tt">Event Graph</span></div>
        </div>
        <div class="viewport">
          <div class="vtool">
            <div class="pill burger"><Icon n="burger" s="19" /></div>
            <div class="pill persp">Perspective</div>
            <div class="pill lit">Lit</div>
            <div class="pill modes"><i class="on"><Icon n="cursor" s="22" /></i><i><Icon n="move" s="20" /></i><i><Icon n="rotate" s="21" /></i><i><Icon n="scale" s="20" /></i></div>
            <div class="pill rnd a"><Icon n="local" s="24" /></div>
            <div class="pill rnd b"><Icon n="snap" s="23" /></div>
            <div class="pill snapg"><i class="on"><Icon n="grid" s="22" /></i><span>10</span></div>
            <div class="pill snapa"><i class="on"><Icon n="angle" s="22" /></i><span>10°</span></div>
            <div class="pill snaps"><i class="on"><Icon n="scaleSnap" s="20" /></i><span>0.25</span></div>
            <div class="pill camp"><Icon n="cam" s="24" /><span>1</span></div>
          </div>
          <svg class="scene" viewBox="684 237 1280 874" width="1280" height="874">
            <path :d="splinePath" fill="#fff" shape-rendering="crispEdges" />
            <g shape-rendering="crispEdges">
              <path d="M729 1065V1043" stroke="#00f" stroke-width="2" />
              <path d="M729 1065L763 1074" stroke="#f00" stroke-width="1.500" />
              <path d="M729 1065L717 1092" stroke="#0f0" stroke-width="1.500" />
            </g>
            <g class="axis" font-size="21">
              <text x="732.500" y="1050" fill="#1010e0">Z</text>
              <text x="766" y="1081" fill="#e01010">X</text>
              <text x="719.500" y="1099" fill="#10f010">Y</text>
            </g>
          </svg>
        </div>
        <div class="tabs res-tabs">
          <div class="tab"><Icon n="log" w="21" h="23" class="tic" /><span class="tt">Compiler Results</span><Icon n="close" s="12" class="x" /></div>
          <div class="tab ghost"><Icon n="search" s="24" class="tic" /><span class="tt">Find Results</span></div>
        </div>
        <div class="results"><div class="clear">CLEAR</div></div>
      </section>

      <aside class="right">
        <div class="tabs"><div class="tab"><Icon n="pen" s="23" class="tic" /><span class="tt">Details</span><Icon n="close" s="12" class="x" /></div></div>
        <div class="dtool"><div class="search"><Icon n="search" s="24" /><span>Search</span></div><Icon n="tableIc" w="22" h="22" class="tbl" /><Icon n="gear" s="23" class="gear" /></div>
        <div class="dbody">
          <div class="dlist">
            <div v-for="(r, i) in rows" :key="i" class="drow" :class="['k-' + r.k, { off: r.off }]">
              <template v-if="r.k === 'head'"><u v-if="r.l" class="tri" /><b>{{ r.l }}</b></template>
              <div v-else-if="r.k === 'adv'" class="lab"><u class="tri r" /><span>{{ r.l }}</span></div>
              <template v-else-if="r.k === 'note'"><div class="notet">{{ r.l }}</div><div class="rst" /></template>
              <template v-else>
                <div class="lab">
                  <u v-if="r.exp" class="tri r" />
                  <div v-if="r.off" class="cb" />
                  <div v-if="r.k === 'scale'" class="scalebox"><span>Scale</span><Icon n="chev" s="18" /></div>
                  <Icon v-if="r.k === 'scale'" n="lock" w="23" h="22" class="lock" />
                  <span v-if="r.l">{{ r.l }}</span>
                </div>
                <div class="val">
                  <div v-if="r.k === 'text'" class="inp t"><span>{{ r.v }}</span></div>
                  <div v-else-if="r.k === 'num'" class="inp n"><span>{{ r.v }}</span></div>
                  <div v-else-if="r.k === 'combo'" class="combo"><div><span>Default</span></div><Icon n="chev" s="18" /></div>
                  <div v-else-if="r.k === 'check'" class="cb"><Icon v-if="r.on" n="check" s="20" /></div>
                  <div v-else-if="r.k === 'scale'" class="vec s"><div class="inp"><s class="cr" />1.0</div><div class="inp"><s class="cg" />1.0</div><div class="inp"><s class="cbl" />1.0</div></div>
                  <div v-else-if="r.k === 'mobility'" class="seg"><span>Static</span><span>Stationa</span><span class="mv">Movable</span></div>
                  <div v-else-if="r.k === 'socket'" class="sock"><div><span>None</span></div><Icon n="folderSmall" s="25" /><Icon n="closeThin" s="21" class="sx" /></div>
                  <div v-else-if="r.k === 'points'" class="pts"><Icon n="prevPt" w="26" h="23" /><Icon n="allPt" w="30" h="25" /><Icon n="nextPt" w="26" h="23" /></div>
                  <div v-else-if="r.k === 'vec'" class="vec"><div class="inp">0.0</div><div class="inp">0.0</div><div class="inp">1.0</div></div>
                  <div v-else-if="r.k === 'color'" class="sw" :class="r.c" />
                </div>
                <div class="rst"><Icon v-if="r.reset" n="reset" w="19" h="17" /></div>
              </template>
            </div>
          </div>
          <div class="bar" />
        </div>
      </aside>
    </main>

    <footer class="status">
      <div class="s1"><Icon n="folderFind" s="26" /><span>Content Drawer</span></div>
      <div class="s2"><Icon n="log" w="21" h="24" /><span>Output Log</span></div>
      <div class="s3"><Icon n="cmd" w="25" h="22" /><span>Cmd</span><Icon n="chev" s="18" class="cv" /><div class="console">Enter Console Command</div></div>
      <div class="s4" />
      <div class="s5"><Icon n="saveStar" s="25" /><span class="uns">1 Unsaved</span><hr><Icon n="branch" w="23" h="24" /><span class="rev">Revision Control</span><i class="grip" /></div>
    </footer>

    <div class="toast">
      <svg class="wm" viewBox="0 0 24 24" width="228" height="228"><circle cx="12" cy="12" r="11.500" fill="none" stroke="#4e5459" stroke-width=".6" /><path :d="unrealU" fill="#4a525c" /></svg>
      <Icon n="houdiniToast" s="48" class="ti" />
      <p>BGEO Importer: BGEO file imported succesfully.</p>
    </div>

    <div class="taskbar">
      <div class="weather"><Icon n="weather" w="38" h="38" class="wi" /><b>1</b><div><p>11°C</p><p class="w2">Grotendeels be...</p></div></div>
      <Icon n="start" w="35" h="35" class="start" />
      <div class="tsearch"><Icon n="search" s="23" /><span>Zoeken</span><svg viewBox="0 0 71 36" width="72" height="36" v-html="tulips" /></div>
      <div class="apps"><div v-for="(a, i) in apps" :key="i" class="app" :class="{ cur: a[1] === 2, run: a[1] === 1 }"><Icon :n="a[0]" s="35" /></div></div>
      <div class="tray">
        <Icon n="chevUp" w="18" h="16" class="tup" />
        <div class="lang"><p>NLD</p><p>BEP</p></div>
        <Icon n="wifi" s="26" /><Icon n="vol" s="24" class="tv" /><Icon n="batt" w="25" h="23" class="tb" />
        <div class="clock"><p>5:28 PM</p><p>3/25/2024</p></div>
        <Icon n="bell" w="23" h="24" class="bell" />
      </div>
    </div>
  </div>
</template>

<style>
body { margin: 0; background: #151515; }
</style>

<style scoped>
.screen { position: relative; width: 2560px; height: 1600px; overflow: hidden; background: #151515; color: #c0c0c0; font: 20px/24px Roboto, sans-serif; display: flex; flex-direction: column; white-space: nowrap; }
.screen * { box-sizing: border-box; }
svg { flex: none; display: block; }
p { margin: 0; }
i { font-style: normal; display: flex; align-items: center; justify-content: center; }
u, s { text-decoration: none; }

.title { height: 87px; display: flex; flex: none; }
.logo { margin: 9px 0 0 10px; }
.title-main { width: 700px; margin-left: 26px; }
.menu { height: 41px; display: flex; padding: 5px 0 0 3px; }
.menu span { flex: none; }
.doc-tab { width: 315px; height: 46px; background: #242424; border-radius: 6px 6px 0 0; display: flex; align-items: center; padding: 0 21px 2px 11px; color: #fff; }
.doc-name { margin-left: 13px; }
.doc-x { margin-left: auto; color: #c0c0c0; }
.title-right { margin-left: auto; width: 300px; padding-right: 24px; }
.win { display: flex; justify-content: flex-end; align-items: center; gap: 44px; height: 51px; margin-right: -2px; }
.wmin { margin-right: 3px; }
.parent { text-align: right; color: #7a7a7a; line-height: 22px; padding-top: 1px; }
.parent b { font-weight: 400; color: #c0c0c0; margin-left: 4px; border-bottom: 2px dotted #a0a0a0; display: inline-block; line-height: 22px; height: 23px; }

.toolbar { height: 63px; background: #242424; display: flex; flex: none; align-items: center; padding-bottom: 2px; }
.tg { height: 61px; display: flex; align-items: center; flex: none; border-right: 2px solid #1a1a1a; }
.tg span { flex: none; }
.g1 { width: 146px; padding-left: 25px; gap: 36px; }
.g2 { width: 179px; padding-left: 24px; } .g2 span { margin-left: 5px; width: 86px; }
.g3 { width: 136px; padding-left: 18px; } .g3 span { margin-left: 6px; width: 37px; }
.g4 { width: 342px; padding-left: 25px; } .g4 span { margin-left: 6px; width: 145px; } .g4 .t-find { width: 67px; }
.g5 { width: 575px; height: 45px; padding-left: 25px; } .g5 span { margin-left: 6px; }
.t-set { width: 162px; } .t-def { width: 164px; } .t-sim { width: 100px; }
.g6 { width: 260px; padding-left: 29px; }
.play { display: flex; width: 211px; height: 45px; background: #383838; border-radius: 7px; }
.play i { width: 42px; border-right: 1px solid #2b2b2b; padding-right: 3px; }
.play .p1 { width: 51px; padding: 0 0 0 3px; } .play .p5 { width: 34px; border: 0; padding: 0 0 0 1px; }
.g7 { padding-left: 26px; border: 0; }
.objsel { width: 222px; height: 45px; border: 2px solid #333; border-radius: 6px; background: #0f0f0f; display: flex; align-items: center; padding-left: 9px; }
.objsel span { width: 177px; }
.objfind { margin-left: 10px; }

.work { height: 1324px; flex: none; display: flex; padding: 6px 7px 0 6px; }
.left { width: 671px; } .mid { width: 1280px; margin-left: 7px; } .right { width: 580px; margin-left: 9px; }
.tabs { display: flex; height: 38px; }
.tab { width: 240px; height: 37px; background: #242424; border-radius: 6px 6px 0 0; display: flex; align-items: center; padding: 0 21px 3px 8px; }
.tab .tic { width: 24px; height: 24px; }
.tt { margin-left: 9px; } .x { margin-left: auto; }
.tight { letter-spacing: -.15px; }
.active { color: #fff; background: linear-gradient(90deg, #242424, #0070e0 50%, #242424) top / 100% 1px no-repeat #242424; }
.active .x { color: #c0c0c0; }
.ghost { background: none; padding-left: 11px; }
.third { margin-left: 4px; }
.ptool { display: flex; align-items: center; background: #242424; height: 48px; }
.add { width: 104px; height: 36px; margin-left: 7px; border-radius: 5px; background: #383838; border: 1px solid #141414; color: #fff; display: flex; align-items: center; gap: 6px; padding-left: 20px; flex: none; }
.comp-tool { padding-bottom: 6px; }
.search { height: 34px; border: 2px solid #333; border-radius: 17px; background: #0f0f0f; display: flex; align-items: center; padding-left: 5px; color: #5b5b5b; flex: none; }
.search svg { color: #c8c8c8; }
.search span { margin: -5px 0 0 11px; }
.comp-tool .search { width: 531px; margin-left: 17px; }
.tree { height: 788px; background: #1a1a1a; padding: 6px 6px 0; }
.trow { height: 36px; display: flex; align-items: center; gap: 8px; padding-left: 6px; }
.self { background: #2c333b; } .sel { background: #42576f; color: #fff; padding-left: 45px; }
.bp-tabs { margin-top: 8px; }
.bp-tool { height: 52px; padding-bottom: 4px; }
.bp-tool .search { width: 507px; margin-left: 8px; }
.bp-tool .gear { margin-left: 9px; color: #c8c8c8; }
.bp { height: 346px; display: flex; background: #1a1a1a; padding-top: 3px; overflow: hidden; }
.bp-list { width: 647px; }
.tri { flex: none; border: solid transparent; border-width: 10px 8px 0; border-top-color: #6e6e6e; width: 0; height: 0; }
.tri.r { border-width: 8px 0 8px 10px; border-left-color: #808080; border-top-color: transparent; }
.bh { height: 42px; background: #2f2f2f; display: flex; align-items: center; padding: 0 13px 0 9px; font-size: 17px; letter-spacing: -.25px; }
.bh b { margin-left: 4px; font-weight: 700; } .bh svg { margin-left: auto; } .bh em { font-style: normal; color: #808080; margin-left: 4px; font-size: 17.500px; letter-spacing: -.45px; }
.bi { height: 38px; display: flex; align-items: center; }
.eg { padding-left: 4px; height: 38px; } .eg svg { margin: 0 4px 0 10px; }
.ev { padding-left: 45px; gap: 4px; }
.ev + .fn { margin-top: 3px; height: 48px; }
.cs { height: 41px; padding: 0 0 4px 29px; gap: 4px; }
.mac b, .last b { margin-left: 20px; padding-left: 0; }
.mac { padding-left: 9px; } .last { margin-top: 3px; }
.bar { border-radius: 6px; width: 12px; background: #575757; }
.bp .bar { margin-left: 6px; height: 253px; }

.viewport { height: 917px; background: #242424; }
.vtool { height: 43px; display: flex; padding-top: 4px; }
.pill { height: 35px; background: #383838; border: 2px solid #141414; border-radius: 18px; display: flex; align-items: center; justify-content: center; overflow: hidden; flex: none; }
.burger { width: 34px; margin-left: 10px; } .persp { width: 124px; margin-left: 12px; } .lit { width: 45px; margin-left: 13px; }
.pill i { height: 31px; width: 38px; border-right: 1px solid #1a1a1a; flex: none; }
.pill i.on { background: #0860bf; width: 35px; }
.modes { width: 148px; margin-left: 448px; } .modes i:last-child { border: 0; width: 33px; }
.rnd { width: 35px; } .a { margin-left: 11px; } .b { margin-left: 9px; }
.pill:has(> span) { justify-content: flex-start; } .pill > span { margin-left: 6px; }
.snapg { width: 73px; margin-left: 10px; } .snapa { width: 78px; margin-left: 9px; } .snaps { width: 86px; margin-left: 18px; }
.camp { width: 62px; margin-left: 11px; padding-left: 8px; }
.axis { font-family: Roboto, sans-serif; }
.res-tabs { margin-top: 8px; }
.results { height: 317px; background: #1a1a1a; display: flex; justify-content: flex-end; align-items: flex-end; padding: 0 22px 23px; }
.clear { width: 116px; height: 33px; background: #2f2f2f; border-radius: 4px; display: flex; align-items: center; justify-content: center; letter-spacing: .6px; color: #6e6e6e; font-size: 20px; }

.dtool { height: 57px; background: #242424; display: flex; padding: 11px 0 0 12px; }
.dtool .search { width: 484px; } .dtool .tbl { margin: 6px 0 0 20px; } .dtool .gear { margin: 6px 0 0 13px; }
.dbody { height: 1223px; background: #1a1a1a; display: flex; overflow: hidden; }
.dbody .bar { margin: 3px 0 0 6px; height: 555px; }
.dlist { width: 557px; font-size: 16px; line-height: 20px; }
.drow { height: 39px; margin-bottom: 1.500px; display: flex; background: #242424; }
.k-head { background: #2f2f2f; align-items: center; padding-left: 7px; }
.k-head .tri { border-top-color: #808080; } .k-head b { margin-left: 10px; font-weight: 700; color: #c8c8c8; }
.lab { width: 223px; padding-left: 33px; display: flex; align-items: center; border-right: 1px solid #1a1a1a; flex: none; }
.k-adv .lab { border: 0; }
.lab .tri { margin: 0 13px 0 -23px; }
.val { width: 302px; padding-left: 18px; display: flex; align-items: center; border-right: 2px solid #1a1a1a; flex: none; }
.rst { width: 32px; display: flex; align-items: center; padding-left: 6px; }
.notet { width: 525px; padding-left: 32px; text-align: center; line-height: 39px; border-right: 2px solid #1a1a1a; }
.inp { width: 188px; height: 30px; background: #0f0f0f; border: 2px solid #2f2f2f; border-radius: 5px; display: flex; align-items: center; padding-left: 12px; }
.inp.t span { margin-top: -4px; }
.n, .vec { color: #fff; }
.off { color: #6a6a6a; } .off .n { background: #1a1a1a; color: #757575; border-color: #2a2a2a; }
.off .lab { padding-left: 31px; } .off .cb { margin-right: 5px; }
.combo { width: 188px; height: 33px; background: #0f0f0f; border: 2px solid #2f2f2f; border-radius: 5px; display: flex; align-items: center; padding-left: 10px; }
.combo div { width: 119px; height: 33px; margin-right: 14px; border: 2px solid #2b2b2b; border-radius: 5px; padding: 3px 0 0 12px; flex: none; }
.cb { width: 27px; height: 27px; border: 2px solid #2f2f2f; border-radius: 4px; background: #0f0f0f; display: flex; align-items: center; justify-content: center; flex: none; }
.scalebox { width: 128px; height: 32px; background: #0f0f0f; border: 2px solid #2f2f2f; border-radius: 5px; display: flex; align-items: center; justify-content: space-between; padding: 0 15px 0 10px; flex: none; }
.lock { margin-left: 12px; }
.vec { display: flex; gap: 4px; } .vec .inp { width: 90px; flex: none; }
.vec.s { gap: 1px; } .vec.s .inp { width: 92px; height: 29px; padding-left: 3px; } .vec.s .inp:last-child { padding-left: 1px; width: 93px; } .vec s { width: 3px; height: 21px; margin-right: 7px; border-radius: 2px 0 0 2px; }
.cr { background: #d32608; } .cg { background: #66a80f; } .cbl { background: #2d7ff0; }
.seg { width: 279px; height: 31px; background: #0f0f0f; border-radius: 5px; display: flex; padding: 1px; letter-spacing: .7px; }
.seg span { flex: 1; text-align: center; line-height: 29px; } .seg .mv { background: #383838; color: #fff; border-radius: 5px; height: 28px; }
.sock { display: flex; align-items: center; } .sock div { width: 110px; height: 36px; background: #2c2c2c; border: 2px solid #333; border-radius: 4px; padding: 4px 0 0 12px; margin-right: 7px; }
.sx { margin-left: 15px; }
.pts { display: flex; align-items: center; gap: 21px; padding-left: 4px; }
.sw { width: 181px; height: 32px; margin-left: 1px; border: 1px solid #383838; border-radius: 6px; background: #fff; }
.sw.orange { background: #eba30a; } .sw.lilac { background: #dac9f5; }

.status { height: 54px; flex: none; display: flex; padding: 6px 4px 0 2px; }
.status > div { height: 48px; background: #242424; display: flex; align-items: center; margin-right: 3px; flex: none; }
.s1 { width: 199px; padding-left: 14px; } .s1 span { margin-left: 5px; }
.s2 { width: 160px; padding-left: 16px; } .s2 span { margin-left: 7px; }
.s3 { width: 548px; padding-left: 19px; } .s3 span { margin-left: 5px; width: 51px; } .cv { margin-right: 18px; }
.console { width: 399px; height: 33px; background: #0f0f0f; border: 2px solid #333; border-radius: 5px; font: 18px/24px 'DejaVu Sans Mono', monospace; color: #555; padding: 1px 0 0 10px; letter-spacing: .14px; }
.status .s4 { width: 1269px; }
.status .s5 { flex: 1; margin: 0; padding-left: 16px; }
.uns { margin-left: 7px; } .s5 hr { width: 2px; height: 24px; border: 0; background: #1a1a1a; margin: 0 14px 0 12px; } .rev { margin-left: 6px; }
.grip { width: 0; height: 0; border: solid transparent; border-width: 0 0 10px 10px; border-bottom-color: #707070; margin: 18px 0 0 1px; }

.toast { position: absolute; left: 2018px; top: 1388px; width: 527px; height: 88px; background: #474c50; border: 1px solid #000; border-radius: 6px; overflow: hidden; }
.wm { position: absolute; left: -1px; top: 0; }
.ti { position: absolute; left: 22px; top: 11px; }
.toast p { position: absolute; left: 85px; top: 11px; width: 400px; font-size: 24px; line-height: 28px; font-weight: 700; letter-spacing: -.17px; white-space: normal; color: #c0c0c0; }

.taskbar { height: 72px; flex: none; background: #122a33; border-top: 2px solid #3a464d; display: flex; color: #fff; font: 18px/24px 'Open Sans', sans-serif; }
.weather { width: 567px; padding: 9px 0 0 28px; display: flex; position: relative; font-size: 17.200px; }
.weather .wi { margin-top: 3px; } .weather b { position: absolute; left: 45px; top: 7px; width: 24px; height: 24px; border-radius: 12px; background: #ff9aa2; color: #222; text-align: center; font-size: 16px; font-weight: 400; }
.weather div { margin-left: 11px; } .w2 { color: #d0d5d7; }
.start { margin-top: 17px; }
.tsearch { width: 330px; height: 48px; margin: 10px 0 0 20px; border-radius: 24px; background: #344852; border: 1px solid #4a5b64; display: flex; align-items: center; padding: 0 8px 0 17px; font-size: 20px; color: #dfe4e6; }
.tsearch span { margin: 0 auto 0 15px; }
.apps { display: flex; margin: 4px 0 0 9px; gap: 14px; flex: none; }
.app { width: 52px; height: 60px; position: relative; padding: 13px 0 0 9px; border-radius: 5px; }
.cur { background: #24383f; border: 1px solid #32474f; padding: 12px 0 0 8px; }
.run::after, .cur::after { content: ''; position: absolute; left: 22px; bottom: 1px; width: 9px; height: 5px; border-radius: 3px; background: #8f9a9f; }
.cur::after { left: 14px; width: 23px; bottom: 0; background: #30e3f5; }
.tray { display: flex; margin-left: auto; align-items: center; width: 380px; padding-bottom: 2px; flex: none; }
.lang { margin: 0 26px 0 29px; text-align: center; width: 38px; } .lang, .clock { font-size: 18px; }
.tv { margin-left: 9px; } .tb { margin-left: 11px; }
.clock { width: 109px; text-align: right; } .bell { margin-left: 11px; }
</style>
